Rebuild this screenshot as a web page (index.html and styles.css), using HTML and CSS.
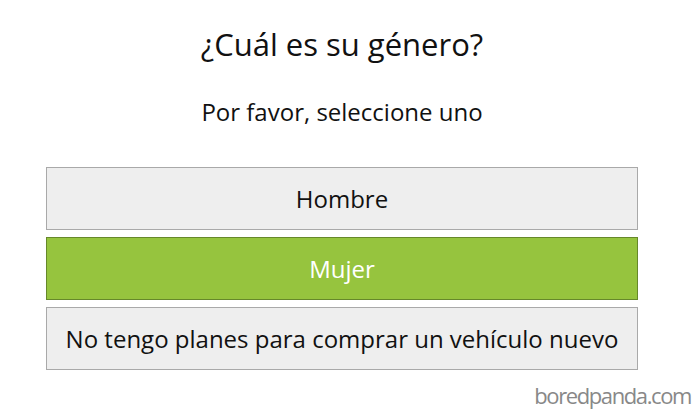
FILE: index.html
```html
<!DOCTYPE html>
<html lang="es">
<head>
<meta charset="utf-8">
<title>¿Cuál es su género?</title>
<link rel="stylesheet" href="styles.css">
</head>
<body>
<main class="survey">
  <h1 class="survey-title">¿Cuál es su género?</h1>
  <p class="survey-hint">Por favor, seleccione uno</p>
  <div class="options">
    <button class="option">Hombre</button>
    <button class="option option-selected">Mujer</button>
    <button class="option">No tengo planes para comprar un vehículo nuevo</button>
  </div>
</main>
<div class="watermark">boredpanda.com</div>
</body>
</html>
```
FILE: styles.css
```css
html, body {
  margin: 0;
  padding: 0;
  background: #ffffff;
}

body {
  width: 700px;
  height: 416px;
  position: relative;
  overflow: hidden;
  font-family: "Open Sans", "Noto Sans", sans-serif;
  color: #111111;
}

.survey {
  width: 592px;
  margin-left: 46px;
  padding-top: 23px;
  display: flex;
  flex-direction: column;
  align-items: center;
}

.survey-title {
  margin: 0;
  font-weight: 400;
  font-size: 31px;
  line-height: 42px;
}

.survey-hint {
  margin: 31px 0 0;
  font-size: 24px;
  line-height: 32px;
}

.options {
  align-self: stretch;
  margin-top: 39px;
  display: flex;
  flex-direction: column;
  gap: 7px;
}

.option {
  height: 63px;
  margin: 0;
  padding: 0;
  box-sizing: border-box;
  border: 1px solid #a9a9a9;
  background: #eeeeee;
  font-family: inherit;
  font-size: 24px;
  color: #111111;
  display: flex;
  align-items: center;
  justify-content: center;
}

.option-selected {
  background: #96c43e;
  border-color: #66882a;
  color: #ffffff;
}

.watermark {
  position: absolute;
  right: 9px;
  bottom: 10px;
  font-size: 22px;
  line-height: 22px;
  color: #888888;
  letter-spacing: -1.4px;
}
```
